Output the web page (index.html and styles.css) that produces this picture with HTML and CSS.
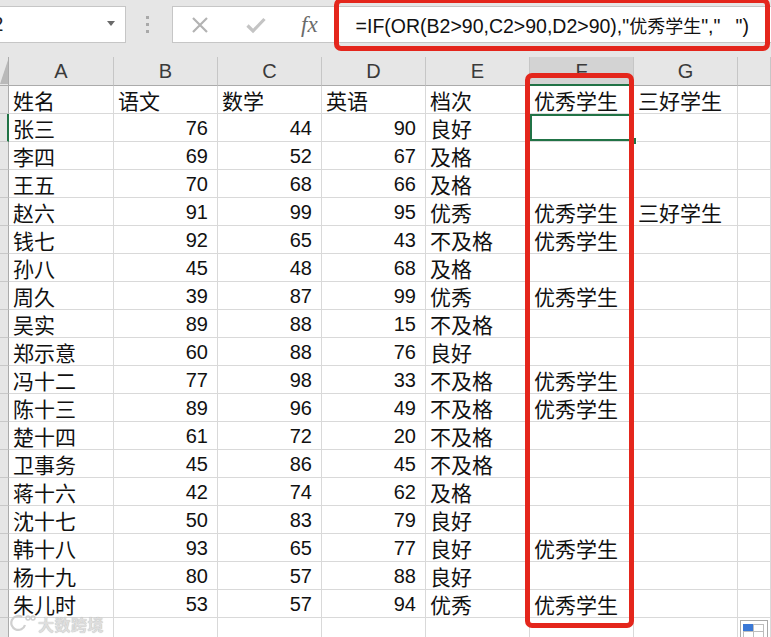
FILE: index.html
```html
<!DOCTYPE html>
<html lang="zh-CN">
<head>
<meta charset="utf-8">
<title>Excel</title>
<link rel="stylesheet" href="styles.css">
</head>
<body>
<div class="app">
  <div class="toolbar">
    <div class="namebox"><span class="nb-text">F2</span><span class="nb-arrow"></span></div>
    <div class="dots"><i></i><i></i><i></i></div>
    <div class="fbar">
      <svg class="ic-x" width="18" height="18" viewBox="0 0 18 18"><path d="M2 2 L16 16 M16 2 L2 16" stroke="#b3b3b3" stroke-width="2.2" fill="none"/></svg>
      <svg class="ic-ok" width="20" height="18" viewBox="0 0 20 18"><path d="M1.5 9.5 L7 15 L18.5 3" stroke="#c4c4c4" stroke-width="3.2" fill="none"/></svg>
      <span class="fx">fx</span>
      <div class="ftext">=IF(OR(B2&gt;90,C2&gt;90,D2&gt;90),"<span class="cjk">优秀学生</span>","<span class="wsp">　</span>")</div>
    </div>
  </div>

  <div class="sheet">
    <div class="corner"><svg width="8" height="26" viewBox="0 0 8 26"><path d="M8 1 L8 25 L0 25 Z" fill="#b9b9b9"/></svg></div>
    <div class="ch">A</div><div class="ch">B</div><div class="ch">C</div><div class="ch">D</div><div class="ch">E</div><div class="ch sel-col">F</div><div class="ch">G</div><div class="ch"></div>

    <div class="rh"></div><div class="c t">姓名</div><div class="c t">语文</div><div class="c t">数学</div><div class="c t">英语</div><div class="c t">档次</div><div class="c t">优秀学生</div><div class="c t">三好学生</div><div class="c"></div>
    <div class="rh rh-sel"></div><div class="c t">张三</div><div class="c n">76</div><div class="c n">44</div><div class="c n">90</div><div class="c t">良好</div><div class="c active"></div><div class="c"></div><div class="c"></div>
    <div class="rh"></div><div class="c t">李四</div><div class="c n">69</div><div class="c n">52</div><div class="c n">67</div><div class="c t">及格</div><div class="c"></div><div class="c"></div><div class="c"></div>
    <div class="rh"></div><div class="c t">王五</div><div class="c n">70</div><div class="c n">68</div><div class="c n">66</div><div class="c t">及格</div><div class="c"></div><div class="c"></div><div class="c"></div>
    <div class="rh"></div><div class="c t">赵六</div><div class="c n">91</div><div class="c n">99</div><div class="c n">95</div><div class="c t">优秀</div><div class="c t">优秀学生</div><div class="c t">三好学生</div><div class="c"></div>
    <div class="rh"></div><div class="c t">钱七</div><div class="c n">92</div><div class="c n">65</div><div class="c n">43</div><div class="c t">不及格</div><div class="c t">优秀学生</div><div class="c"></div><div class="c"></div>
    <div class="rh"></div><div class="c t">孙八</div><div class="c n">45</div><div class="c n">48</div><div class="c n">68</div><div class="c t">及格</div><div class="c"></div><div class="c"></div><div class="c"></div>
    <div class="rh"></div><div class="c t">周久</div><div class="c n">39</div><div class="c n">87</div><div class="c n">99</div><div class="c t">优秀</div><div class="c t">优秀学生</div><div class="c"></div><div class="c"></div>
    <div class="rh"></div><div class="c t">吴实</div><div class="c n">89</div><div class="c n">88</div><div class="c n">15</div><div class="c t">不及格</div><div class="c"></div><div class="c"></div><div class="c"></div>
    <div class="rh"></div><div class="c t">郑示意</div><div class="c n">60</div><div class="c n">88</div><div class="c n">76</div><div class="c t">良好</div><div class="c"></div><div class="c"></div><div class="c"></div>
    <div class="rh"></div><div class="c t">冯十二</div><div class="c n">77</div><div class="c n">98</div><div class="c n">33</div><div class="c t">不及格</div><div class="c t">优秀学生</div><div class="c"></div><div class="c"></div>
    <div class="rh"></div><div class="c t">陈十三</div><div class="c n">89</div><div class="c n">96</div><div class="c n">49</div><div class="c t">不及格</div><div class="c t">优秀学生</div><div class="c"></div><div class="c"></div>
    <div class="rh"></div><div class="c t">楚十四</div><div class="c n">61</div><div class="c n">72</div><div class="c n">20</div><div class="c t">不及格</div><div class="c"></div><div class="c"></div><div class="c"></div>
    <div class="rh"></div><div class="c t">卫事务</div><div class="c n">45</div><div class="c n">86</div><div class="c n">45</div><div class="c t">不及格</div><div class="c"></div><div class="c"></div><div class="c"></div>
    <div class="rh"></div><div class="c t">蒋十六</div><div class="c n">42</div><div class="c n">74</div><div class="c n">62</div><div class="c t">及格</div><div class="c"></div><div class="c"></div><div class="c"></div>
    <div class="rh"></div><div class="c t">沈十七</div><div class="c n">50</div><div class="c n">83</div><div class="c n">79</div><div class="c t">良好</div><div class="c"></div><div class="c"></div><div class="c"></div>
    <div class="rh"></div><div class="c t">韩十八</div><div class="c n">93</div><div class="c n">65</div><div class="c n">77</div><div class="c t">良好</div><div class="c t">优秀学生</div><div class="c"></div><div class="c"></div>
    <div class="rh"></div><div class="c t">杨十九</div><div class="c n">80</div><div class="c n">57</div><div class="c n">88</div><div class="c t">良好</div><div class="c"></div><div class="c"></div><div class="c"></div>
    <div class="rh"></div><div class="c t">朱儿时</div><div class="c n">53</div><div class="c n">57</div><div class="c n">94</div><div class="c t">优秀</div><div class="c t">优秀学生</div><div class="c"></div><div class="c"></div>
    <div class="rh"></div><div class="c"></div><div class="c"></div><div class="c"></div><div class="c"></div><div class="c"></div><div class="c"></div><div class="c"></div><div class="c"></div>
  </div>

  <div class="mark mark-formula"></div>
  <div class="mark mark-col"></div>

  <div class="watermark">
    <svg width="26" height="20" viewBox="0 0 26 20"><path d="M12 3 A7 7 0 1 0 15 11" stroke="#c8c8c8" stroke-width="2.2" fill="none"/><circle cx="18" cy="4" r="2" stroke="#c8c8c8" stroke-width="1.4" fill="none"/><circle cx="23" cy="4" r="2" stroke="#c8c8c8" stroke-width="1.4" fill="none"/></svg>
    <span>大数跨境</span>
  </div>

  <div class="qa"><i class="qa-blue"></i><i></i><i></i><i></i></div>
</div>
</body>
</html>
```

FILE: styles.css
```css
html, body {
  margin: 0;
  padding: 0;
  background: #ffffff;
  overflow: hidden;
}

.app {
  position: relative;
  width: 771px;
  height: 637px;
  overflow: hidden;
  font-family: "Liberation Sans", "Noto Sans CJK SC", sans-serif;
  color: #111;
}

/* ---------- toolbar ---------- */
.toolbar {
  height: 57px;
  background: #e6e6e6;
  display: flex;
  align-items: flex-start;
}

.namebox {
  box-sizing: border-box;
  width: 126px;
  height: 37px;
  margin-top: 6px;
  background: #fff;
  border: 1px solid #c6c6c6;
  border-left: none;
  display: flex;
  align-items: center;
  justify-content: space-between;
  overflow: hidden;
}

.nb-text {
  font-size: 20px;
  margin-left: -20px;
  color: #222;
}

.nb-arrow {
  width: 0;
  height: 0;
  border-top: 5px solid #6a6a6a;
  border-left: 4px solid transparent;
  border-right: 4px solid transparent;
  margin-right: 10px;
  margin-top: -3px;
}

.dots {
  margin-left: 20px;
  margin-top: 16px;
  display: flex;
  flex-direction: column;
  gap: 4px;
}

.dots i {
  display: block;
  width: 3px;
  height: 3px;
  background: #a9a9a9;
}

.fbar {
  box-sizing: border-box;
  flex: 1;
  height: 37px;
  margin-top: 6px;
  margin-left: 23px;
  background: #fff;
  border: 1px solid #c6c6c6;
  border-right: none;
  display: flex;
  align-items: center;
}

.ic-x {
  margin-left: 18px;
  flex: none;
}

.ic-ok {
  margin-left: 37px;
  flex: none;
}

.fx {
  margin-left: 35px;
  font-family: "Liberation Serif", serif;
  font-style: italic;
  font-size: 23px;
  color: #6b6b6b;
  flex: none;
}

.ftext {
  margin-left: 38px;
  font-size: 19.5px;
  white-space: nowrap;
  color: #111;
}

.ftext .cjk {
  font-family: "Noto Sans CJK SC", sans-serif;
  font-size: 18px;
}

.ftext .wsp {
  font-family: "Noto Sans CJK SC", sans-serif;
  font-size: 15px;
}

/* ---------- sheet ---------- */
.sheet {
  display: grid;
  grid-template-columns: 9px 105px repeat(6, 104px) 1fr;
  grid-template-rows: 29px;
  grid-auto-rows: 28px;
}

.corner {
  box-sizing: border-box;
  background: #e6e6e6;
  border-right: 1px solid #ababab;
  border-bottom: 1px solid #ababab;
  display: flex;
  align-items: flex-end;
}

.corner svg {
  display: block;
}

.ch {
  box-sizing: border-box;
  background: #e6e6e6;
  border-right: 1px solid #c6c6c6;
  border-bottom: 1px solid #ababab;
  text-align: center;
  font-size: 20px;
  line-height: 29px;
  color: #3a3a3a;
}

.ch.sel-col {
  background: #d3d3d3;
  border-bottom: 2px solid #217346;
}

.rh {
  box-sizing: border-box;
  background: #e6e6e6;
  border-right: 1px solid #ababab;
  border-bottom: 1px solid #c8c8c8;
}

.rh.rh-sel {
  border-right: 2px solid #217346;
}

.c {
  box-sizing: border-box;
  border-right: 1px solid #d9d9d9;
  border-bottom: 1px solid #d9d9d9;
  line-height: 27px;
  white-space: nowrap;
  overflow: hidden;
}

.c.t {
  font-family: "Noto Sans CJK SC", sans-serif;
  font-size: 21px;
  padding-left: 4px;
  line-height: 28px;
}

.c.n {
  font-size: 20px;
  text-align: right;
  padding-right: 9px;
  line-height: 29px;
}

.c.active {
  position: relative;
  overflow: visible;
  box-shadow: inset 0 0 0 2px #217346;
}

.c.active::after {
  content: "";
  position: absolute;
  right: -4px;
  bottom: -4px;
  width: 6px;
  height: 6px;
  background: #217346;
  border: 1px solid #fff;
}

/* ---------- annotations ---------- */
.mark {
  position: absolute;
  box-sizing: border-box;
  border: 5px solid #e4261c;
  border-radius: 7px;
  pointer-events: none;
}

.mark-formula {
  left: 334px;
  top: -2px;
  width: 436px;
  height: 53px;
}

.mark-col {
  left: 525px;
  top: 73px;
  width: 109px;
  height: 555px;
}

.watermark {
  position: absolute;
  left: 10px;
  top: 614px;
  display: flex;
  align-items: center;
  gap: 2px;
  opacity: 0.85;
}

.watermark span {
  font-family: "Noto Sans CJK SC", sans-serif;
  font-size: 16px;
  line-height: 20px;
  font-weight: 700;
  color: #d9d9d9;
  text-shadow: 0 0 1px #9a9a9a;
  letter-spacing: 0.5px;
}

.qa {
  position: absolute;
  left: 740px;
  top: 620px;
  box-sizing: border-box;
  width: 28px;
  height: 22px;
  background: #fff;
  border: 1px solid #a8a8a8;
  padding: 4px 3px;
  display: grid;
  grid-template-columns: 10px 10px;
  grid-template-rows: 7px 7px;
}

.qa i {
  display: block;
  box-sizing: border-box;
  border: 1px solid #bdbdbd;
  margin: -1px 0 0 -1px;
}

.qa i.qa-blue {
  background: #3a78d6;
  border-color: #3a78d6;
}
```
